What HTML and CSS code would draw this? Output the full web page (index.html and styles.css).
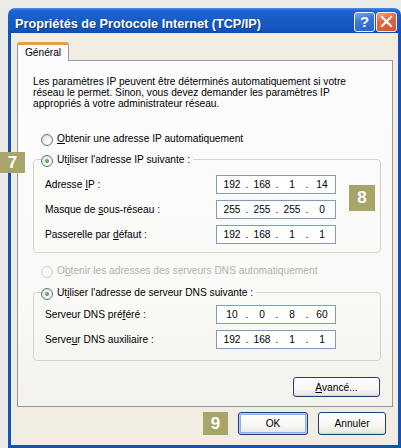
FILE: index.html
```html
<!DOCTYPE html>
<html lang="fr">
<head>
<meta charset="utf-8">
<title>Propriétés de Protocole Internet (TCP/IP)</title>
<link rel="stylesheet" href="styles.css">
</head>
<body>
<div class="window">
  <div class="titlebar">
    <span class="title">Propriétés de Protocole Internet (TCP/IP)</span>
    <div class="tbtns">
      <span class="tbtn help">?</span>
      <span class="tbtn close"><svg width="13" height="13" viewBox="0 0 13 13"><path d="M2 2 L11 11 M11 2 L2 11" stroke="#fff" stroke-width="2.2" stroke-linecap="square" fill="none"/></svg></span>
    </div>
  </div>
  <div class="frame">
    <div class="tabs"><div class="tab">Général</div></div>
    <div class="panel">
      <p class="intro">Les paramètres IP peuvent être déterminés automatiquement si votre<br>réseau le permet. Sinon, vous devez demander les paramètres IP<br>appropriés à votre administrateur réseau.</p>
      <div class="radio first"><span class="rb"></span><span><u>O</u>btenir une adresse IP automatiquement</span></div>
      <fieldset class="group g1">
        <legend><span class="radio"><span class="rb on"></span><span>Ut<u>i</u>liser l'adresse IP suivante :</span></span></legend>
        <div class="rows">
          <span class="lbl">Adresse <u>I</u>P :</span>
          <div class="ip"><span class="o">192</span><span class="d">.</span><span class="o">168</span><span class="d">.</span><span class="o">1</span><span class="d">.</span><span class="o">14</span></div>
          <span class="lbl">Masque de <u>s</u>ous-réseau :</span>
          <div class="ip"><span class="o">255</span><span class="d">.</span><span class="o">255</span><span class="d">.</span><span class="o">255</span><span class="d">.</span><span class="o">0</span></div>
          <span class="lbl">Passerelle par <u>d</u>éfaut :</span>
          <div class="ip"><span class="o">192</span><span class="d">.</span><span class="o">168</span><span class="d">.</span><span class="o">1</span><span class="d">.</span><span class="o">1</span></div>
        </div>
      </fieldset>
      <div class="radio dis"><span class="rb off"></span><span>O<u>b</u>tenir les adresses des serveurs DNS automatiquement</span></div>
      <fieldset class="group g2">
        <legend><span class="radio"><span class="rb on"></span><span>Ut<u>i</u>liser l'adresse de serveur DNS suivante :</span></span></legend>
        <div class="rows">
          <span class="lbl">Serveur DNS pré<u>f</u>éré :</span>
          <div class="ip"><span class="o">10</span><span class="d">.</span><span class="o">0</span><span class="d">.</span><span class="o">8</span><span class="d">.</span><span class="o">60</span></div>
          <span class="lbl">Serve<u>u</u>r DNS auxiliaire :</span>
          <div class="ip"><span class="o">192</span><span class="d">.</span><span class="o">168</span><span class="d">.</span><span class="o">1</span><span class="d">.</span><span class="o">1</span></div>
        </div>
      </fieldset>
      <div class="adv-row"><button class="btn adv"><u>A</u>vancé...</button></div>
    </div>
    <div class="footer">
      <button class="btn ok">OK</button>
      <button class="btn cancel">Annuler</button>
    </div>
  </div>
</div>
<span class="badge b7">7</span>
<span class="badge b8">8</span>
<span class="badge b9">9</span>
</body>
</html>
```
FILE: styles.css
```css
html, body {
  margin: 0;
  padding: 0;
}
body {
  position: relative;
  width: 401px;
  height: 448px;
  overflow: hidden;
  background: #ebebe8;
  font-family: "Liberation Sans", Arial, sans-serif;
  font-size: 10.2px;
  color: #000;
}
u {
  text-decoration: underline;
  text-underline-offset: 1px;
}
.window {
  margin: 8px 0 0 8px;
  width: 393px;
  height: 440px;
  display: flex;
  flex-direction: column;
}
.titlebar {
  height: 25px;
  flex: none;
  display: flex;
  align-items: center;
  padding: 0 4px 0 7px;
  border-radius: 7px 7px 0 0;
  background: linear-gradient(180deg, #4a8ae8 0px, #1e63cf 3px, #165bc6 50%, #1355bd 85%, #0f4cae 100%);
}
.title {
  flex: 1;
  color: #fff;
  font-weight: bold;
  font-size: 12.7px;
  padding-top: 6px;
  text-shadow: 1px 1px 0 #0c3a8a;
  white-space: nowrap;
}
.tbtns {
  display: flex;
  gap: 1px;
  margin-top: 2px;
}
.tbtn {
  width: 21px;
  height: 20px;
  box-sizing: border-box;
  border: 1px solid #f2f2f2;
  border-radius: 3px;
  display: flex;
  align-items: center;
  justify-content: center;
  color: #fff;
}
.help {
  background: linear-gradient(160deg, #7eaaf0 0%, #3f78da 40%, #2a62cc 100%);
  font-weight: bold;
  font-size: 15px;
}
.close {
  background: linear-gradient(160deg, #f3a37f 0%, #e26a3e 40%, #d2542b 100%);
}
.frame {
  flex: 1;
  display: flex;
  flex-direction: column;
  background: #f1ede3;
  border: 3px solid #1452bb;
  border-top: 0;
  padding: 9px 5px 0 6px;
}
.tabs {
  display: flex;
  height: 18px;
  position: relative;
  z-index: 1;
}
.tab {
  width: 52px;
  height: 19px;
  box-sizing: border-box;
  border: 1px solid #919b9c;
  border-top: 3px solid #e8a03c;
  border-bottom: 0;
  border-radius: 3px 3px 0 0;
  background: #fcfcfe;
  text-align: center;
  line-height: 14px;
  padding-top: 1px;
}
.panel {
  height: 347px;
  box-sizing: border-box;
  border: 1px solid #919b9c;
  background: linear-gradient(180deg, #fcfcfe 0%, #f9f9f6 70%, #f3f2ec 100%);
  padding: 15px 11px 0 15px;
  display: flex;
  flex-direction: column;
}
.intro {
  margin: 0;
  line-height: 11px;
}
.radio {
  display: flex;
  align-items: center;
  gap: 4px;
  height: 13px;
  line-height: 13px;
  white-space: nowrap;
}
.first {
  margin: 23px 0 0 8px;
}
.dis {
  margin: 11px 0 0 8px;
  color: #b5b2a6;
}
.rb {
  flex: none;
  position: relative;
  top: 1px;
  width: 12px;
  height: 12px;
  box-sizing: border-box;
  border-radius: 50%;
  border: 1px solid #5a7596;
  background: radial-gradient(circle at 70% 70%, #ffffff 0%, #f3f2ee 40%, #d9d7cd 100%);
}
.rb.on::after {
  content: "";
  position: absolute;
  left: 3px;
  top: 3px;
  width: 4px;
  height: 4px;
  border-radius: 50%;
  background: radial-gradient(circle at 35% 35%, #7fb877, #3d8434);
}
.rb.off {
  border-color: #d0cec3;
  background: #fbfbf9;
}
.group {
  margin: 0;
  border: 1px solid #d6d3c6;
  border-radius: 4px;
  padding: 9px 11px 8px 11px;
  min-width: 0;
}
.g1 {
  margin-top: 8px;
}
.g2 {
  margin-top: 9px;
  padding-top: 6px;
  padding-bottom: 11px;
}
.group legend {
  padding: 0 3px 0 0;
  margin-left: -4px;
  line-height: 13px;
}
.rows {
  display: grid;
  grid-template-columns: 171px 120px;
  grid-auto-rows: 19px;
  row-gap: 6px;
  align-items: center;
}
.ip {
  height: 19px;
  box-sizing: border-box;
  border: 1px solid #7f9db9;
  background: #fff;
  display: flex;
  align-items: center;
  padding-left: 3px;
}
.o {
  width: 24px;
  text-align: center;
}
.d {
  width: 6px;
  text-align: center;
}
.adv-row {
  display: flex;
  justify-content: flex-end;
  margin-top: 16px;
  padding-right: 1px;
}
.btn {
  font: inherit;
  color: #000;
  padding: 0;
  box-sizing: border-box;
  border: 1px solid #1f3f6e;
  border-radius: 3px;
  background: linear-gradient(180deg, #ffffff 0%, #f7f7f4 60%, #ecebe5 88%, #d8d3c8 100%);
}
.adv {
  width: 87px;
  height: 20px;
}
.footer {
  display: flex;
  justify-content: flex-end;
  gap: 10px;
  padding: 5px 7px 0 0;
}
.ok {
  width: 70px;
  height: 23px;
  box-shadow: inset 0 0 0 1px #b7cdf2, inset 0 0 0 2px #8fb0e8;
}
.cancel {
  width: 68px;
  height: 23px;
}
.badge {
  position: absolute;
  background: #a9a56a;
  color: #fff;
  font-family: "Liberation Sans", Arial, sans-serif;
  font-weight: bold;
  font-size: 17px;
  display: flex;
  align-items: center;
  justify-content: center;
}
.b7 {
  left: 0;
  top: 152px;
  width: 25px;
  height: 21px;
}
.b8 {
  left: 349px;
  top: 185px;
  width: 26px;
  height: 26px;
}
.b9 {
  left: 203px;
  top: 412px;
  width: 25px;
  height: 23px;
}
```
